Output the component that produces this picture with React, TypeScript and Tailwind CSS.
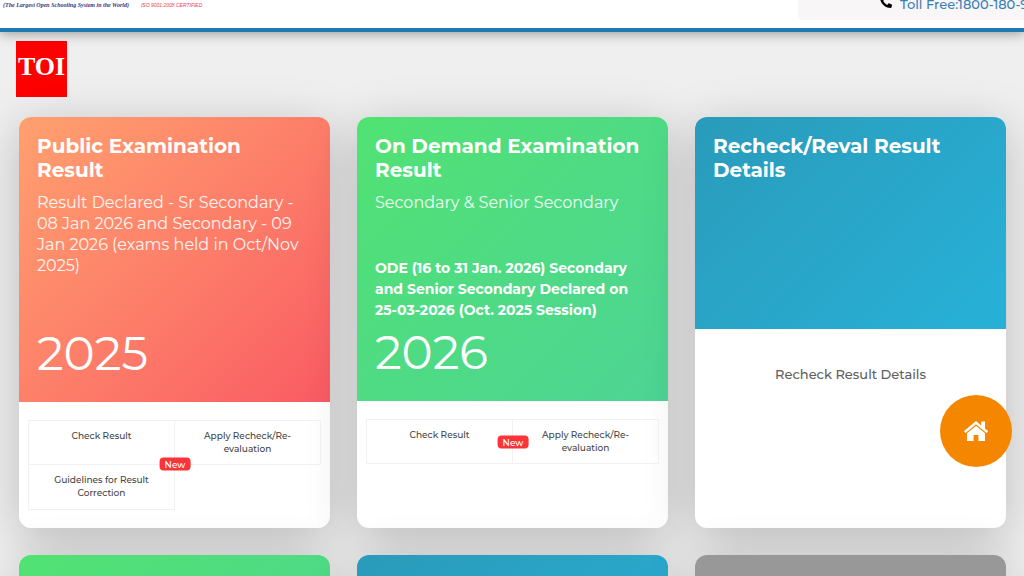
import React from "react";
import { FaPhoneAlt } from "react-icons/fa";

interface ResultLink {
  label: string;
  badge?: string;
}

interface ResultCard {
  title: string[];
  subtitle?: string[];
  note?: string[];
  year?: string;
  head: string;
  links: ResultLink[];
}

const cards: ResultCard[] = [
  {
    title: ["Public Examination", "Result"],
    subtitle: [
      "Result Declared - Sr Secondary -",
      "08 Jan 2026 and Secondary - 09",
      "Jan 2026 (exams held in Oct/Nov",
      "2025)",
    ],
    year: "2025",
    head: "h-[285px] bg-linear-135 from-[#ffa06f] to-[#f95a63]",
    links: [
      { label: "Check Result" },
      { label: "Apply Recheck/Re-evaluation", badge: "top-full" },
      { label: "Guidelines for Result Correction" },
    ],
  },
  {
    title: ["On Demand Examination", "Result"],
    subtitle: ["Secondary & Senior Secondary"],
    note: [
      "ODE (16 to 31 Jan. 2026) Secondary",
      "and Senior Secondary Declared on",
      "25-03-2026 (Oct. 2025 Session)",
    ],
    year: "2026",
    head: "h-[284px] bg-linear-135 from-[#51e272] to-[#4dd494]",
    links: [
      { label: "Check Result" },
      { label: "Apply Recheck/Re-evaluation", badge: "top-1/2" },
    ],
  },
  {
    title: ["Recheck/Reval Result", "Details"],
    head: "h-[212px] bg-linear-135 from-[#2a9bba] to-[#27b1d8]",
    links: [{ label: "Recheck Result Details" }],
  },
];

const nextRow = [
  "bg-linear-135 from-[#51e272] to-[#4dd494]",
  "bg-linear-135 from-[#2a9bba] to-[#27b1d8]",
  "bg-[#989898]",
];

const Lines: React.FC<{ lines: string[] }> = ({ lines }) => (
  <>
    {lines.map((line) => (
      <span key={line} className="block whitespace-nowrap">
        {line}
      </span>
    ))}
  </>
);

const HomeIcon: React.FC = () => (
  <svg viewBox="0 0 26 22" className="h-[22px] w-[26px]" fill="currentColor" aria-hidden="true">
    <path d="M13 1 0.8 11.2 2.5 13.1 13 4.3l10.5 8.8 1.7-1.9-3.2-2.7V1.6h-3.8v3.8z" />
    <path d="M13 5.8 4 13.3V21h6.6v-6h4.8v6H22v-7.7z" />
  </svg>
);

const Header: React.FC = () => (
  <header className="relative z-10 h-8 border-b-4 border-[#2079b0] bg-white shadow-[0_2px_12px_rgba(0,0,0,0.35)]">
    <div className="flex h-7 items-start justify-between overflow-hidden">
      <p className="mt-px ml-[3px] flex gap-3 whitespace-nowrap leading-[8px] italic">
        <span className="font-['Liberation_Serif',serif] text-[6px] font-bold text-[#35357f]">
          (The Largest Open Schooling System in the World)
        </span>
        <span className="font-['Liberation_Sans',sans-serif] text-[5px] text-[#e8434f]">
          ISO 9001:2008 CERTIFIED
        </span>
      </p>
      <a
        href="#toll-free"
        className="flex h-5 w-[226px] items-start gap-2 overflow-hidden rounded-bl bg-[#f8f6f6] pl-[82px] whitespace-nowrap text-[13px] leading-[8px] font-medium text-[#3b7fb6]"
      >
        <FaPhoneAlt className="-mt-1 size-3 shrink-0 text-black" />
        Toll Free:1800-180-9393
      </a>
    </div>
  </header>
);

const Card: React.FC<{ card: ResultCard }> = ({ card }) => (
  <article className="flex h-[411px] flex-col overflow-hidden rounded-xl bg-white shadow-[0_10px_50px_rgba(0,0,0,0.22)]">
    <div className={`${card.head} flex shrink-0 flex-col px-[18px] pt-[17px] text-white`}>
      <h2 className="text-xl leading-6 font-bold">
        <Lines lines={card.title} />
      </h2>
      {card.subtitle && (
        <p className="mt-[10px] text-base leading-[21px] text-white/90">
          <Lines lines={card.subtitle} />
        </p>
      )}
      <div className="mt-auto">
        {card.note && (
          <p className="text-sm leading-[21px] font-bold">
            <Lines lines={card.note} />
          </p>
        )}
        {card.year && (
          <p className="mb-[17px] text-[47px] leading-[63px]">{card.year}</p>
        )}
      </div>
    </div>

    {card.links.length > 1 ? (
      <ul className="mx-[9px] mt-[18px] grid grid-cols-2 border-l border-[#f1f1f1] text-center text-[9px] leading-[13px] font-medium text-[#444444]">
        {card.links.map((link, i) => (
          <li
            key={link.label}
            className={`relative h-[45px] border-r border-b border-[#f1f1f1] ${i < 2 ? "border-t" : ""}`}
          >
            <a href="#result" className="mx-auto block w-[104px] pt-2">
              {link.label}
            </a>
            {link.badge && (
              <span
                className={`${link.badge} absolute left-0 z-10 -translate-x-1/2 -translate-y-1/2 rounded bg-[#fb3439] px-[5px] text-[9px] leading-[13px] font-medium text-white`}
              >
                New
              </span>
            )}
          </li>
        ))}
      </ul>
    ) : (
      <a
        href="#result"
        className="mt-9 text-center text-[13px] leading-[18px] font-medium text-[#606060]"
      >
        {card.links[0].label}
      </a>
    )}
  </article>
);

const App: React.FC = () => (
  <div className="h-screen overflow-hidden bg-[#efefef] font-['Montserrat','Inter',sans-serif]">
    <Header />
    <main className="pr-[18px] pl-[19px]">
      <div className="-ml-[3px] pt-[9px]">
        <div className="flex h-14 w-[51px] justify-center bg-[#fe0000] pt-[11px] font-['Liberation_Serif',serif] text-[26px] leading-[30px] font-bold text-white">
          TOI
        </div>
      </div>
      <div className="mt-5 grid grid-cols-3 gap-[27px]">
        {cards.map((card) => (
          <Card key={card.title[0]} card={card} />
        ))}
        {nextRow.map((head) => (
          <div
            key={head}
            className="h-[411px] rounded-xl shadow-[0_10px_50px_rgba(0,0,0,0.22)]"
          >
            <div className={`${head} h-[285px] rounded-t-xl`} />
          </div>
        ))}
      </div>
    </main>
    <button
      type="button"
      aria-label="Home"
      className="fixed right-3 bottom-[109px] z-20 flex size-[72px] items-center justify-center rounded-full bg-[#f58700] text-white"
    >
      <HomeIcon />
    </button>
  </div>
);

export default App;
